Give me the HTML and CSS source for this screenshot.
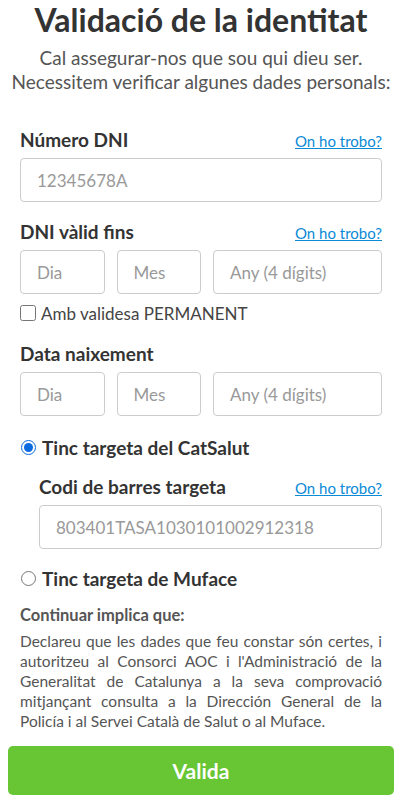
FILE: index.html
```html
<!DOCTYPE html>
<html lang="ca">
<head>
<meta charset="utf-8">
<title>Validació de la identitat</title>
<link rel="stylesheet" href="styles.css">
</head>
<body>
<main class="page">
  <h1 class="title">Validació de la identitat</h1>
  <p class="subtitle">Cal assegurar-nos que sou qui dieu ser.<br>Necessitem verificar algunes dades personals:</p>

  <form class="form">
    <div class="field">
      <div class="label-row">
        <label class="label">Número DNI</label>
        <a class="help" href="#">On ho trobo?</a>
      </div>
      <input class="input" type="text" placeholder="12345678A">
    </div>

    <div class="field field-check">
      <div class="label-row">
        <label class="label">DNI vàlid fins</label>
        <a class="help" href="#">On ho trobo?</a>
      </div>
      <div class="date-row">
        <input class="input" type="text" placeholder="Dia">
        <input class="input" type="text" placeholder="Mes">
        <input class="input" type="text" placeholder="Any (4 dígits)">
      </div>
      <label class="check">
        <input type="checkbox" class="box">
        <span>Amb validesa PERMANENT</span>
      </label>
    </div>

    <div class="field field-birth">
      <div class="label-row">
        <label class="label">Data naixement</label>
      </div>
      <div class="date-row">
        <input class="input" type="text" placeholder="Dia">
        <input class="input" type="text" placeholder="Mes">
        <input class="input" type="text" placeholder="Any (4 dígits)">
      </div>
    </div>

    <label class="radio">
      <input type="radio" name="card" class="dot" checked>
      <span>Tinc targeta del CatSalut</span>
    </label>

    <div class="field indent">
      <div class="label-row">
        <label class="label">Codi de barres targeta</label>
        <a class="help" href="#">On ho trobo?</a>
      </div>
      <input class="input" type="text" placeholder="803401TASA1030101002912318">
    </div>

    <label class="radio">
      <input type="radio" name="card" class="dot">
      <span>Tinc targeta de Muface</span>
    </label>

    <h2 class="legal-title">Continuar implica que:</h2>
    <p class="legal">Declareu que les dades que feu constar són certes, i autoritzeu al Consorci AOC i l'Administració de la Generalitat de Catalunya a la seva comprovació mitjançant consulta a la Dirección General de la Policía i al Servei Català de Salut o al Muface.</p>

    <button type="button" class="submit">Valida</button>
  </form>
</main>
</body>
</html>
```

FILE: styles.css
```css
* { box-sizing: border-box; }

html, body {
  margin: 0;
  padding: 0;
  background: #ffffff;
}

body {
  font-family: Lato, "Open Sans", sans-serif;
  color: #333333;
}

.page {
  width: 386px;
  margin: 0 0 0 8px;
}

.title {
  margin: 0;
  font-size: 32px;
  line-height: 40px;
  font-weight: 700;
  text-align: center;
  color: #333333;
}

.subtitle {
  margin: 6px 0 0;
  font-size: 19px;
  line-height: 24px;
  text-align: center;
  color: #555555;
}

.form {
  padding: 0 12px;
  margin-top: 35px;
}

.field {
  margin-bottom: 19px;
}

.field-check {
  margin-bottom: 20px;
}

.field-birth {
  margin-bottom: 20px;
}

.label-row {
  display: flex;
  justify-content: space-between;
  align-items: baseline;
  height: 22px;
  margin-bottom: 7px;
}

.label {
  font-size: 19px;
  line-height: 22px;
  font-weight: 700;
  color: #333333;
}

.help {
  font-size: 15px;
  line-height: 22px;
  color: #0b8ad6;
  text-decoration: underline;
}

.input {
  display: block;
  width: 100%;
  height: 44px;
  margin: 0;
  padding: 0 16px;
  border: 1px solid #cccccc;
  border-radius: 4px;
  font-family: Lato, sans-serif;
  font-size: 17px;
  color: #333333;
  background: #ffffff;
}

.input::placeholder {
  color: #999999;
}

.date-row {
  display: grid;
  grid-template-columns: 1fr 1fr 2fr;
  gap: 12px;
}

.check {
  display: flex;
  align-items: center;
  gap: 5px;
  margin-top: 9px;
  height: 20px;
  font-size: 17px;
  color: #444444;
}

.box {
  width: 16px;
  height: 16px;
  margin: 0;
}

.radio {
  display: flex;
  align-items: center;
  gap: 6px;
  height: 22px;
  margin-left: 1px;
  font-size: 19px;
  font-weight: 700;
  color: #333333;
}

.dot {
  width: 15px;
  height: 15px;
  margin: 0;
  accent-color: #0b6be0;
}

.indent {
  margin-top: 18px;
  margin-left: 19px;
  margin-bottom: 18px;
}

.legal-title {
  margin: 16px 0 0;
  font-size: 16.5px;
  line-height: 20px;
  font-weight: 700;
  color: #555555;
}

.legal {
  margin: 6px 0 0;
  font-size: 15.5px;
  line-height: 20px;
  text-align: justify;
  color: #555555;
}

.submit {
  display: block;
  width: 386px;
  height: 49px;
  margin: 15px 0 0 -12px;
  border: 0;
  border-radius: 5px;
  background: #68c534;
  color: #ffffff;
  font-family: Lato, sans-serif;
  font-size: 21px;
  font-weight: 700;
}
```
